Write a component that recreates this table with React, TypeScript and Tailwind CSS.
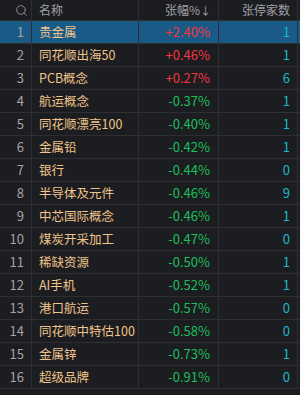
import { Search } from 'lucide-react';

interface Row {
  name: string;
  pct: string;
  count: number;
}

const rows: Row[] = [
  { name: '贵金属', pct: '+2.40%', count: 1 },
  { name: '同花顺出海50', pct: '+0.46%', count: 1 },
  { name: 'PCB概念', pct: '+0.27%', count: 6 },
  { name: '航运概念', pct: '-0.37%', count: 1 },
  { name: '同花顺漂亮100', pct: '-0.40%', count: 1 },
  { name: '金属铅', pct: '-0.42%', count: 1 },
  { name: '银行', pct: '-0.44%', count: 0 },
  { name: '半导体及元件', pct: '-0.46%', count: 9 },
  { name: '中芯国际概念', pct: '-0.46%', count: 1 },
  { name: '煤炭开采加工', pct: '-0.47%', count: 0 },
  { name: '稀缺资源', pct: '-0.50%', count: 1 },
  { name: 'AI手机', pct: '-0.52%', count: 1 },
  { name: '港口航运', pct: '-0.57%', count: 0 },
  { name: '同花顺中特估100', pct: '-0.58%', count: 0 },
  { name: '金属锌', pct: '-0.73%', count: 1 },
  { name: '超级品牌', pct: '-0.91%', count: 0 },
];

export default function App() {
  return (
    <div
      className="h-[395px] w-[300px] overflow-hidden bg-[#1c1d21] text-[13px]"
      style={{ fontFamily: '"Noto Sans CJK SC", "Noto Sans", sans-serif' }}
    >
      {/* Header */}
      <div className="flex h-[21px] border-b border-[#2e2f33] text-[12px] text-[#a0a0a4]">
        <div className="flex w-[32px] items-center justify-end border-r border-[#2e2f33] pr-[3px]">
          <Search className="h-[13px] w-[13px]" strokeWidth={1.5} />
        </div>
        <div className="flex w-[107px] items-center border-r border-[#2e2f33] pl-[7px]">名称</div>
        <div className="flex w-[80px] items-center justify-end border-r border-[#2e2f33] pr-[7px]">
          张幅%<span className="text-[11px]">↓</span>
        </div>
        <div className="flex w-[79px] items-center justify-end border-r border-[#2e2f33] pr-[7px]">张停家数</div>
      </div>

      {/* Rows */}
      {rows.map((row, i) => {
        const up = row.pct.startsWith('+');
        return (
          <div
            key={row.name}
            className={`flex h-[23px] border-b border-[#2e2f33] ${i === 0 ? 'bg-[#195a86]' : ''}`}
          >
            <div className="flex w-[32px] items-center justify-end border-r border-[#2e2f33] pr-[7px] text-[#a4a4a8]">
              {i + 1}
            </div>
            <div className="flex w-[107px] items-center whitespace-nowrap border-r border-[#2e2f33] pl-[7px] text-[12.5px] text-[#f0c48a]">
              {row.name}
            </div>
            <div
              className={`flex w-[80px] items-center justify-end border-r border-[#2e2f33] pr-[8px] ${
                up ? 'text-[#f4363f]' : 'text-[#1dbf5a]'
              }`}
            >
              {row.pct}
            </div>
            <div className="flex w-[79px] items-center justify-end border-r border-[#2e2f33] pr-[7px] text-[#1cb6c8]">
              {row.count}
            </div>
          </div>
        );
      })}
    </div>
  );
}
